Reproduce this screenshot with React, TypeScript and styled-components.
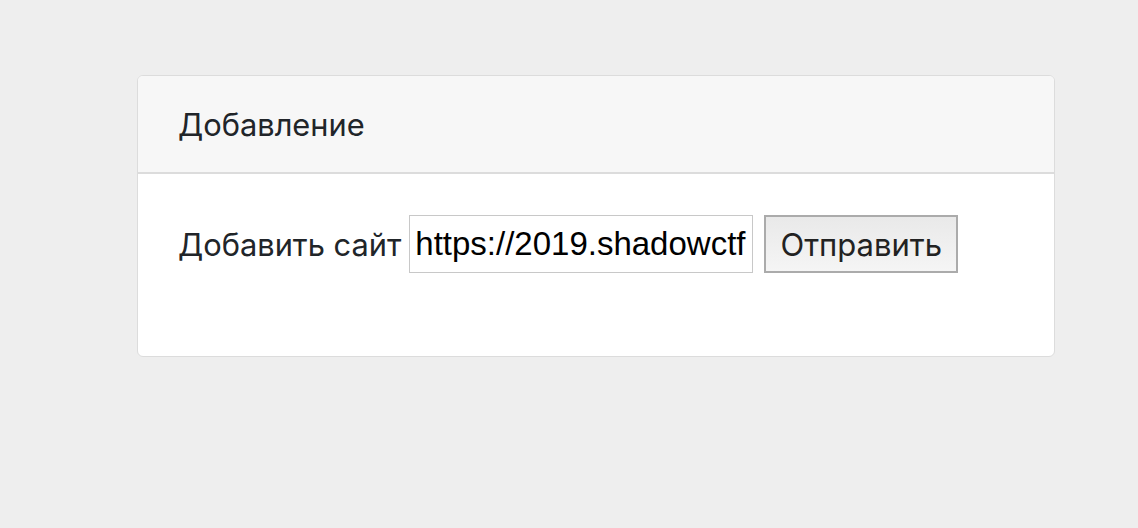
import React from "react";
import styled, { createGlobalStyle } from "styled-components";

const Global = createGlobalStyle`
  html, body { margin: 0; padding: 0; background: #eeeeee; }
  body { font-family: Inter, "Noto Sans", sans-serif; color: #212529; }
`;

const Page = styled.div`
  padding: 75px 83px 0 137px;
  min-height: 528px;
  box-sizing: border-box;
`;

const Card = styled.div`
  width: 918px;
  background: #ffffff;
  border: 1px solid #dcdcdc;
  border-radius: 6px;
  box-sizing: border-box;
  overflow: hidden;
`;

const CardHeader = styled.div`
  background: #f7f7f7;
  border-bottom: 2px solid #dcdcdc;
  height: 98px;
  padding: 0 40px;
  display: flex;
  align-items: center;
  font-size: 30.8px;
  box-sizing: border-box;
`;

const CardBody = styled.div`
  padding: 41px 40px 83px;
`;

const Form = styled.form`
  display: flex;
  align-items: center;
  margin: 0;
`;

const Label = styled.label`
  font-size: 30.8px;
  margin-right: 8px;
`;

const Input = styled.input`
  width: 344px;
  height: 58px;
  box-sizing: border-box;
  border: 1px solid #c8c8c8;
  padding: 0 5px;
  font-family: "Liberation Sans", Arial, sans-serif;
  font-size: 33px;
  color: #000;
  outline: none;
  margin-right: 11px;
`;

const Button = styled.button`
  width: 194px;
  height: 58px;
  box-sizing: border-box;
  border: 2px solid #ababab;
  background: linear-gradient(#e9e9e9, #f5f5f5);
  font-family: Inter, "Noto Sans", sans-serif;
  font-size: 31px;
  color: #222;
  padding: 0;
`;

export default function App() {
  return (
    <>
      <Global />
      <Page>
        <Card>
          <CardHeader>Добавление</CardHeader>
          <CardBody>
            <Form onSubmit={(e) => e.preventDefault()}>
              <Label>Добавить сайт</Label>
              <Input defaultValue="https://2019.shadowctf.ru" />
              <Button type="submit">Отправить</Button>
            </Form>
          </CardBody>
        </Card>
      </Page>
    </>
  );
}
